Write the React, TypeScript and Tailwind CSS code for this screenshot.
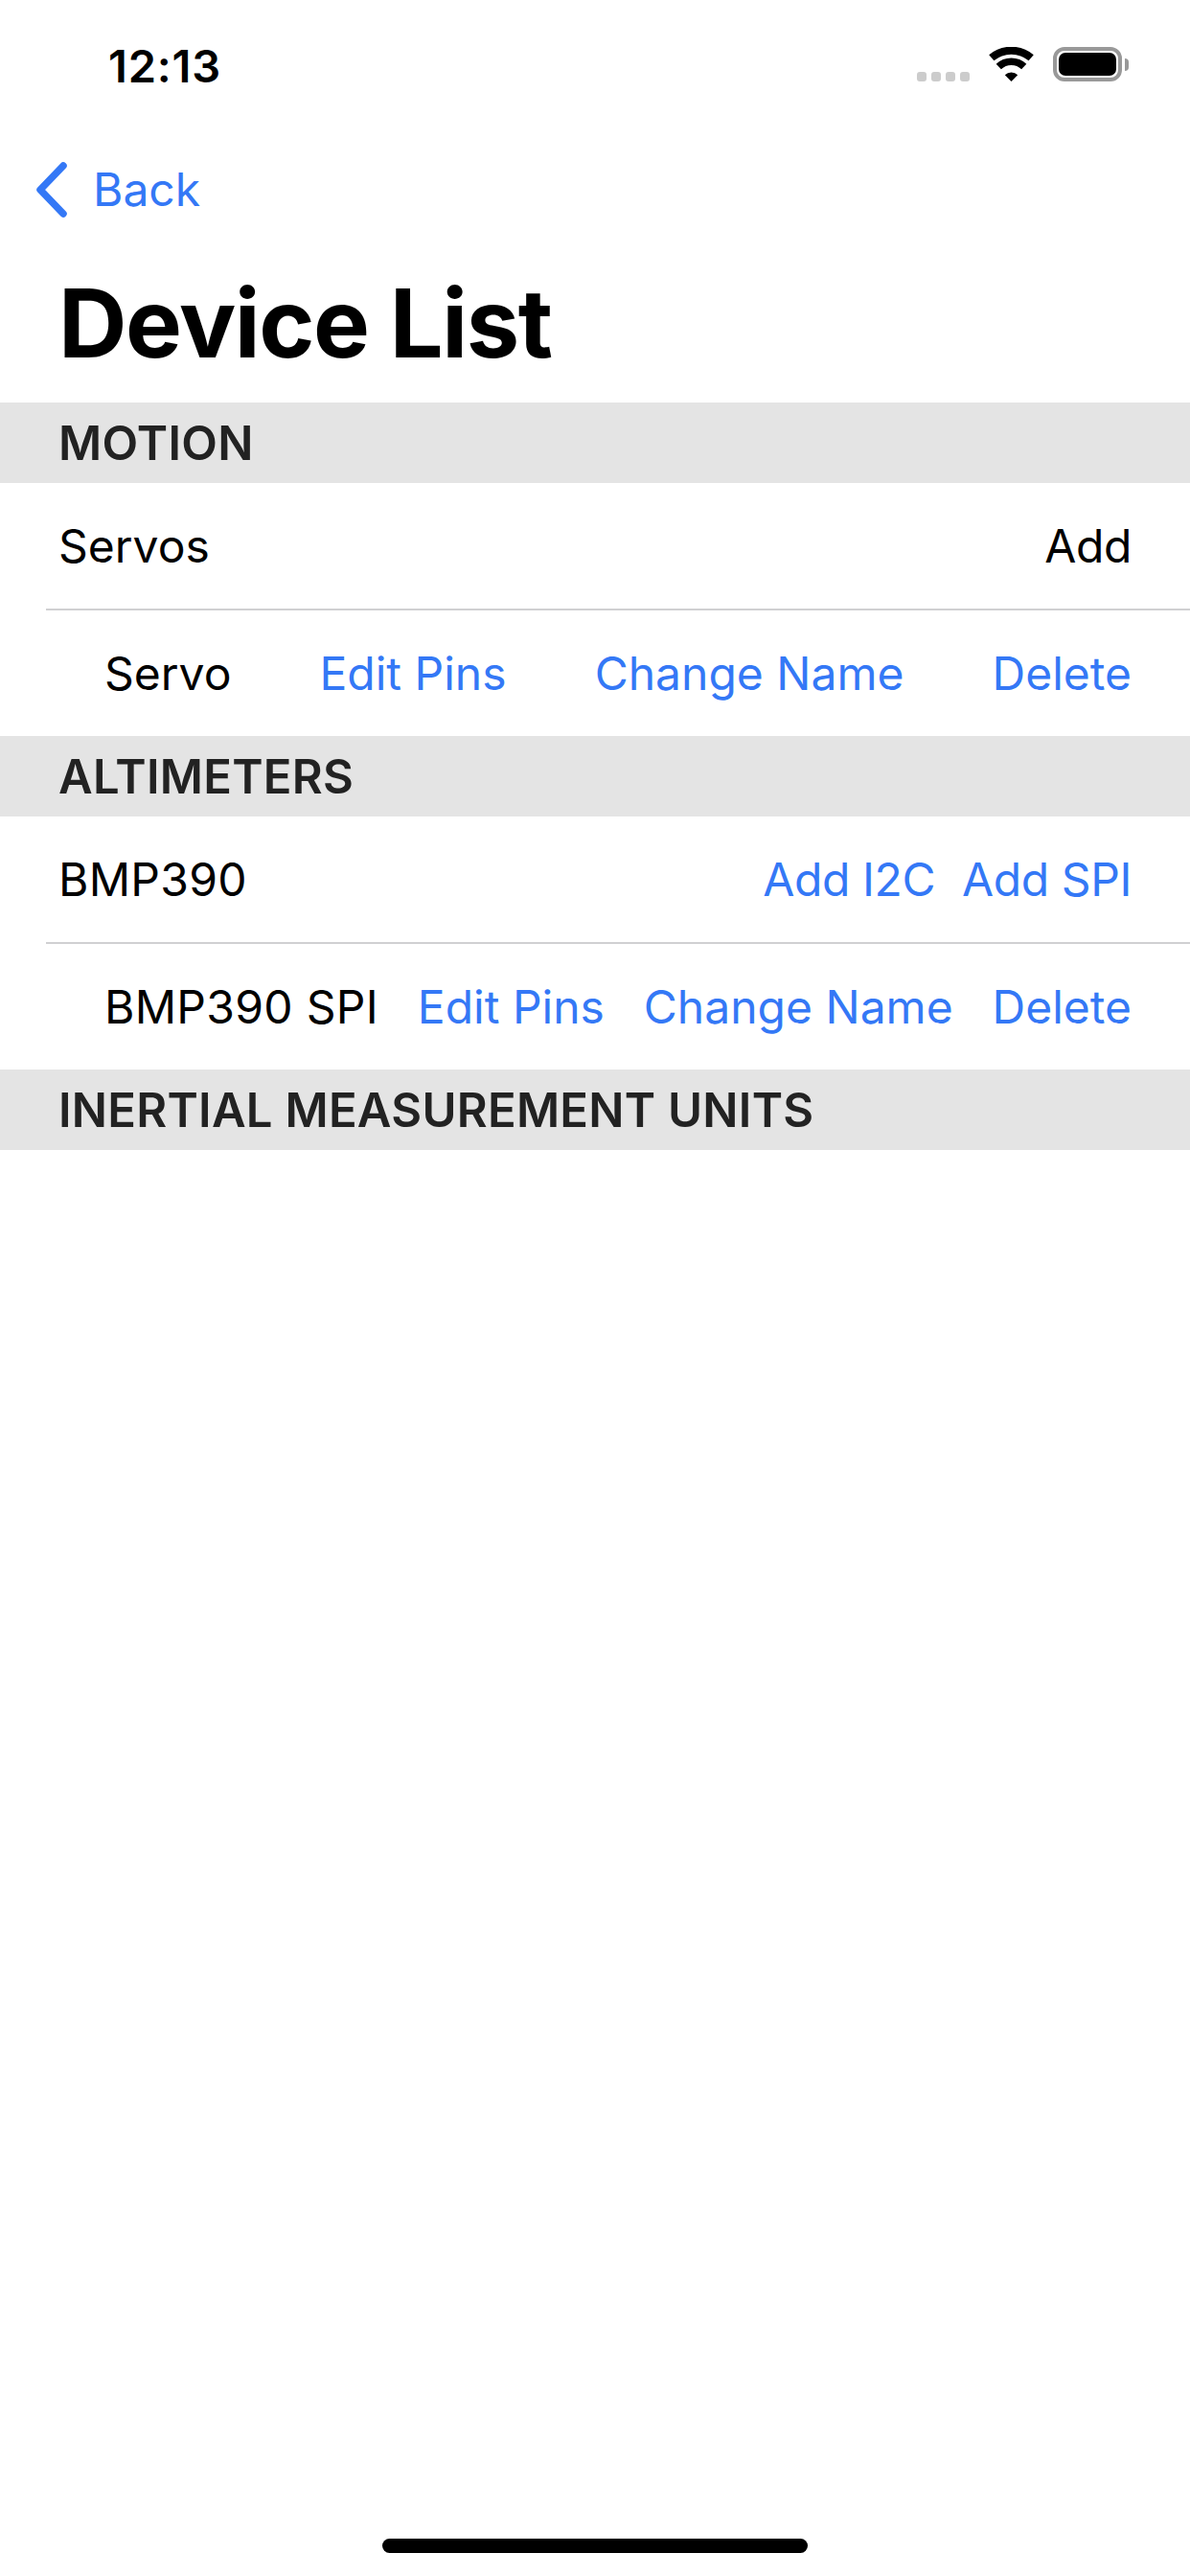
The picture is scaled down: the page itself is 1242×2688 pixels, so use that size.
import { ReactNode } from 'react';

const uiFont = "[font-family:Inter,'Liberation_Sans',sans-serif]";

function StatusBar() {
  return (
    <div className="flex h-[132px] shrink-0 items-start justify-between pl-[113px] pr-[64px] pt-[45px]">
      <span className="text-[47px] font-semibold leading-[47px] tracking-[0.8px] text-black">12:13</span>
      <div className="flex items-end pt-[4px]">
        <div className="flex gap-[5px]">
          {[0, 1, 2, 3].map((dot) => (
            <div key={dot} className="h-[10px] w-[10px] rounded-[3px] bg-[#cccccc]" />
          ))}
        </div>
        <svg className="ml-[20px] h-[36px] w-[47px]" viewBox="0 0 47 36" fill="none">
          <path d="M2.8 11.3A32 32 0 0 1 44.2 11.3" stroke="#000" strokeWidth="8" />
          <path d="M10.3 20.5A19 19 0 0 1 36.7 20.5" stroke="#000" strokeWidth="7.5" />
          <path d="M23.5 36L16.8 29.2A9.5 9.5 0 0 1 30.2 29.2Z" fill="#000" />
        </svg>
        <div className="ml-[20px] flex items-center">
          <div className="h-[36px] w-[72px] rounded-[12px] border-[4px] border-[#999999] p-[2px]">
            <div className="h-full w-full rounded-[7px] bg-black" />
          </div>
          <div className="ml-[3px] h-[13px] w-[4px] rounded-r-[4px] bg-[#999999]" />
        </div>
      </div>
    </div>
  );
}

function SectionHeader({ title }: { title: string }) {
  return (
    <div className="flex h-[84px] items-center bg-[#e4e4e4] pl-[61px] pt-[2px]">
      <span className="text-[49px] font-semibold tracking-[0.27px] text-[#222222]">{title}</span>
    </div>
  );
}

function Link({ label }: { label: string }) {
  return <span className="text-[#3478f6]">{label}</span>;
}

function ChildRow({ name }: { name: ReactNode }) {
  return (
    <div className="flex h-[131px] items-center justify-between whitespace-nowrap pl-[109px] pr-[61px] text-[48px] text-black">
      {name}
      <Link label="Edit Pins" />
      <Link label="Change Name" />
      <Link label="Delete" />
    </div>
  );
}

export default function App() {
  return (
    <div className={`flex h-[2688px] w-[1242px] flex-col bg-white ${uiFont}`}>
      <StatusBar />

      <div className="flex h-[132px] shrink-0 items-center pl-[38px]">
        <svg className="h-[58px] w-[32px]" viewBox="0 0 32 58" fill="none">
          <path d="M28 4L4 29L28 54" stroke="#3478f6" strokeWidth="7.5" strokeLinecap="round" strokeLinejoin="round" />
        </svg>
        <span className="ml-[27px] text-[48px] text-[#3478f6]">Back</span>
      </div>

      <div className="flex h-[156px] shrink-0 items-center pb-[10px] pl-[61px]">
        <h1 className="text-[99px] font-bold tracking-[-1.4px] text-black">Device List</h1>
      </div>

      <SectionHeader title="MOTION" />
      <div className="flex h-[131px] items-center justify-between px-[61px] text-[48px] text-black">
        <span>Servos</span>
        <span className="tracking-[-0.4px]">Add</span>
      </div>
      <div className="ml-[48px] h-[2px] bg-[#d0d0d2]" />
      <ChildRow name={<span>Servo</span>} />

      <SectionHeader title="ALTIMETERS" />
      <div className="flex h-[131px] items-center justify-between px-[61px] text-[48px] text-black">
        <span className="tracking-[0.3px]">BMP390</span>
        <div className="flex gap-[28px] tracking-[-0.4px]">
          <Link label="Add I2C" />
          <Link label="Add SPI" />
        </div>
      </div>
      <div className="ml-[48px] h-[2px] bg-[#d0d0d2]" />
      <ChildRow name={<span className="tracking-[0.3px]">BMP390 SPI</span>} />

      <SectionHeader title="INERTIAL MEASUREMENT UNITS" />

      <div className="mb-[24px] mt-auto h-[15px] w-[444px] self-center rounded-full bg-black" />
    </div>
  );
}
